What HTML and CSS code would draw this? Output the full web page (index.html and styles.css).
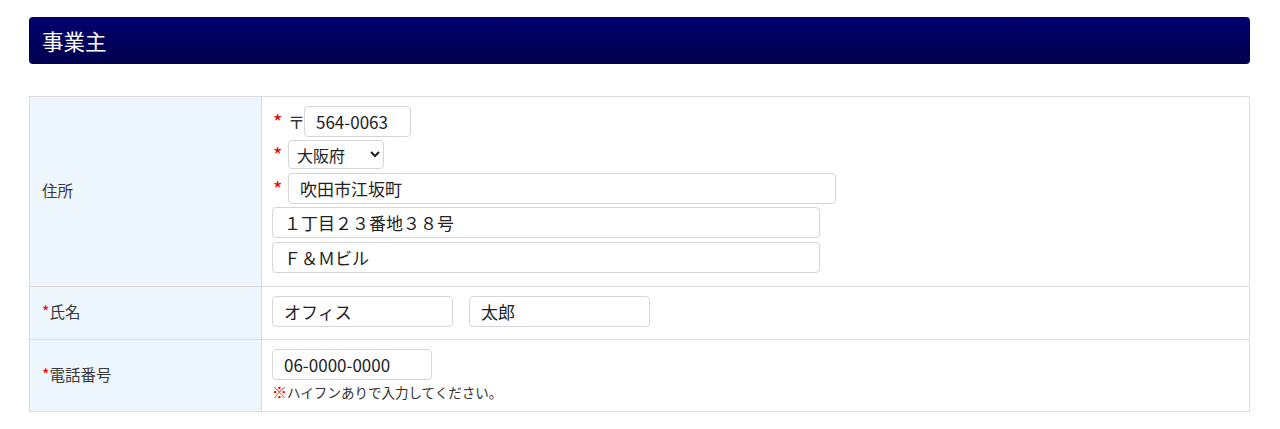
FILE: index.html
```html
<!DOCTYPE html>
<html lang="ja">
<head>
<meta charset="utf-8">
<link rel="stylesheet" href="styles.css">
</head>
<body>
<div class="page">
  <h2 class="section-title">事業主</h2>
  <table class="form-table">
    <tr class="row-address">
      <th>住所</th>
      <td>
        <div class="line l1"><span class="req">*</span><span class="zip">〒</span><input class="inp zip-inp" value="564-0063"></div>
        <div class="line l2"><span class="req">*</span><select class="sel"><option>大阪府</option></select></div>
        <div class="line l3"><span class="req">*</span><input class="inp wide" value="吹田市江坂町"></div>
        <div class="line l4"><input class="inp wide" value="１丁目２３番地３８号"></div>
        <div class="line"><input class="inp wide" value="Ｆ＆Ｍビル"></div>
      </td>
    </tr>
    <tr class="row-name">
      <th><span class="req-s">*</span>氏名</th>
      <td>
        <div class="line names"><input class="inp name" value="オフィス"><input class="inp name" value="太郎"></div>
      </td>
    </tr>
    <tr class="row-tel">
      <th><span class="req-s">*</span>電話番号</th>
      <td>
        <div class="line"><input class="inp tel" value="06-0000-0000"></div>
        <p class="note"><span class="kome">※</span>ハイフンありで入力してください。</p>
      </td>
    </tr>
  </table>
</div>
</body>
</html>
```

FILE: styles.css
```css
html, body {
  margin: 0;
  padding: 0;
  background: #fff;
}
body {
  font-family: "Noto Sans CJK JP", "Noto Sans", sans-serif;
  color: #333;
}
.page {
  padding: 17px 30px 0 29px;
}
.section-title {
  margin: 0;
  height: 47px;
  box-sizing: border-box;
  padding: 0 13px;
  display: flex;
  align-items: center;
  color: #fff;
  font-size: 21.5px;
  font-weight: normal;
  border-radius: 4px;
  background: linear-gradient(#00006e, #00004e);
}
.form-table {
  margin-top: 32px;
  width: 100%;
  border-collapse: collapse;
  table-layout: fixed;
  font-size: 15.5px;
}
.form-table th,
.form-table td {
  border: 1px solid #dcdcdc;
}
.form-table th {
  width: 207px;
  background: #edf5fd;
  text-align: left;
  font-weight: normal;
  padding: 0 12px 4px;
  vertical-align: middle;
  color: #3a3a3a;
}
.form-table td {
  padding: 9px 10px 12px;
  vertical-align: top;
}
.row-address td {
  padding-bottom: 13px;
}
.row-tel td {
  padding-bottom: 10px;
}
.line {
  display: flex;
  align-items: center;
  margin-bottom: 3px;
}
.line:last-child { margin-bottom: 0; }
.l2, .l4 { margin-bottom: 4px; }
.req {
  color: #e00;
  width: 16px;
  text-align: left;
  padding-left: 1px;
  box-sizing: border-box;
  font-size: 20px;
  line-height: 1;
}
.req-s {
  color: #e00;
  font-size: 16px;
  margin-right: 0;
}
.zip {
  width: 16px;
  font-size: 17px;
  box-sizing: border-box;
}
.inp {
  font-family: inherit;
  font-size: 17px;
  color: #222;
  height: 31px;
  box-sizing: border-box;
  border: 1px solid #d6d6d6;
  border-radius: 4px;
  padding: 0 11px;
  background: #fff;
  outline: none;
}
.zip-inp { width: 107px; }
.wide { width: 548px; }
.name { width: 181px; }
.names { gap: 16px; }
.tel { width: 160px; }
.sel {
  font-family: inherit;
  font-size: 16px;
  color: #222;
  height: 29px;
  width: 96px;
  border: 1px solid #d6d6d6;
  border-radius: 4px;
  padding: 0 4px;
  background: #fff;
}
.note {
  margin: 1px 0 0;
  height: 18px;
  display: flex;
  align-items: center;
  font-size: 13.5px;
  color: #333;
  line-height: 18px;
}
.kome {
  color: #e00;
  font-weight: bold;
  font-size: 15px;
  line-height: 18px;
}
```
